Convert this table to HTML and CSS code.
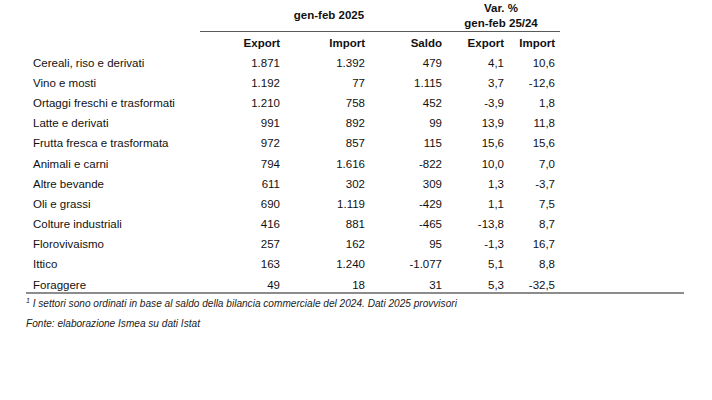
FILE: index.html
```html
<!DOCTYPE html>
<html lang="it">
<head>
<meta charset="utf-8">
<title>Bilancia commerciale agroalimentare gen-feb 2025</title>
<link rel="stylesheet" href="styles.css">
</head>
<body>
<div class="page">
  <table class="trade">
    <colgroup>
      <col class="c-label">
      <col class="c-exp">
      <col class="c-imp">
      <col class="c-saldo">
      <col class="c-vexp">
      <col class="c-vimp">
      <col class="c-rest">
    </colgroup>
    <thead>
      <tr class="group">
        <th></th>
        <th colspan="3" class="span">gen-feb 2025</th>
        <th colspan="2" class="span span-var">Var. %<br>gen-feb 25/24</th>
        <th></th>
      </tr>
      <tr class="sub">
        <th></th>
        <th class="num">Export</th>
        <th class="num">Import</th>
        <th class="num">Saldo</th>
        <th class="num">Export</th>
        <th class="num last">Import</th>
        <th></th>
      </tr>
    </thead>
    <tbody>
      <tr><td class="label">Cereali, riso e derivati</td><td class="num">1.871</td><td class="num">1.392</td><td class="num">479</td><td class="num">4,1</td><td class="num last">10,6</td><td></td></tr>
      <tr><td class="label">Vino e mosti</td><td class="num">1.192</td><td class="num">77</td><td class="num">1.115</td><td class="num">3,7</td><td class="num last">-12,6</td><td></td></tr>
      <tr><td class="label">Ortaggi freschi e trasformati</td><td class="num">1.210</td><td class="num">758</td><td class="num">452</td><td class="num">-3,9</td><td class="num last">1,8</td><td></td></tr>
      <tr><td class="label">Latte e derivati</td><td class="num">991</td><td class="num">892</td><td class="num">99</td><td class="num">13,9</td><td class="num last">11,8</td><td></td></tr>
      <tr><td class="label">Frutta fresca e trasformata</td><td class="num">972</td><td class="num">857</td><td class="num">115</td><td class="num">15,6</td><td class="num last">15,6</td><td></td></tr>
      <tr><td class="label">Animali e carni</td><td class="num">794</td><td class="num">1.616</td><td class="num">-822</td><td class="num">10,0</td><td class="num last">7,0</td><td></td></tr>
      <tr><td class="label">Altre bevande</td><td class="num">611</td><td class="num">302</td><td class="num">309</td><td class="num">1,3</td><td class="num last">-3,7</td><td></td></tr>
      <tr><td class="label">Oli e grassi</td><td class="num">690</td><td class="num">1.119</td><td class="num">-429</td><td class="num">1,1</td><td class="num last">7,5</td><td></td></tr>
      <tr><td class="label">Colture industriali</td><td class="num">416</td><td class="num">881</td><td class="num">-465</td><td class="num">-13,8</td><td class="num last">8,7</td><td></td></tr>
      <tr><td class="label">Florovivaismo</td><td class="num">257</td><td class="num">162</td><td class="num">95</td><td class="num">-1,3</td><td class="num last">16,7</td><td></td></tr>
      <tr><td class="label">Ittico</td><td class="num">163</td><td class="num">1.240</td><td class="num">-1.077</td><td class="num">5,1</td><td class="num last">8,8</td><td></td></tr>
      <tr class="final"><td class="label">Foraggere</td><td class="num">49</td><td class="num">18</td><td class="num">31</td><td class="num">5,3</td><td class="num last">-32,5</td><td></td></tr>
    </tbody>
  </table>
  <p class="note"><sup>1</sup> I settori sono ordinati in base al saldo della bilancia commerciale del 2024. Dati 2025 provvisori</p>
  <p class="note">Fonte: elaborazione Ismea su dati Istat</p>
</div>
</body>
</html>
```

FILE: styles.css
```css
html, body {
  margin: 0;
  padding: 0;
  background: #ffffff;
}

.page {
  padding-left: 26px;
  font-family: "Liberation Sans", Arial, sans-serif;
  color: #111111;
  font-size: 11.5px;
}

.trade {
  width: 658px;
  table-layout: fixed;
  border-collapse: collapse;
}

.c-label { width: 174px; }
.c-exp { width: 80px; }
.c-imp { width: 85px; }
.c-saldo { width: 77px; }
.c-vexp { width: 62px; }
.c-vimp { width: 56px; }
.c-rest { width: 124px; }

.trade th,
.trade td {
  padding: 0;
  font-weight: normal;
  white-space: nowrap;
}

.trade th {
  font-weight: bold;
}

.trade .group th {
  height: 31px;
  line-height: 15px;
  vertical-align: middle;
}

.trade .group .span {
  text-align: center;
  border-bottom: 1px solid #5a5a5a;
  padding-left: 16px;
}

.trade .group .span-var {
  padding-left: 0;
}

.trade .sub th {
  height: 21px;
  vertical-align: middle;
}

.trade td {
  height: 20.1px;
  vertical-align: middle;
}

.trade .label {
  padding-left: 7px;
  text-align: left;
}

.num {
  text-align: right;
}

.trade .last {
  padding-right: 5px;
}

.trade .final td {
  height: 15px;
  padding-top: 3px;
  border-bottom: 2px solid #8c8c8c;
}

.note {
  margin: 0;
  font-style: italic;
  font-size: 10.1px;
  line-height: 20px;
  color: #222222;
}

.note sup {
  font-size: 7px;
  vertical-align: 4px;
  line-height: 0;
}
```
